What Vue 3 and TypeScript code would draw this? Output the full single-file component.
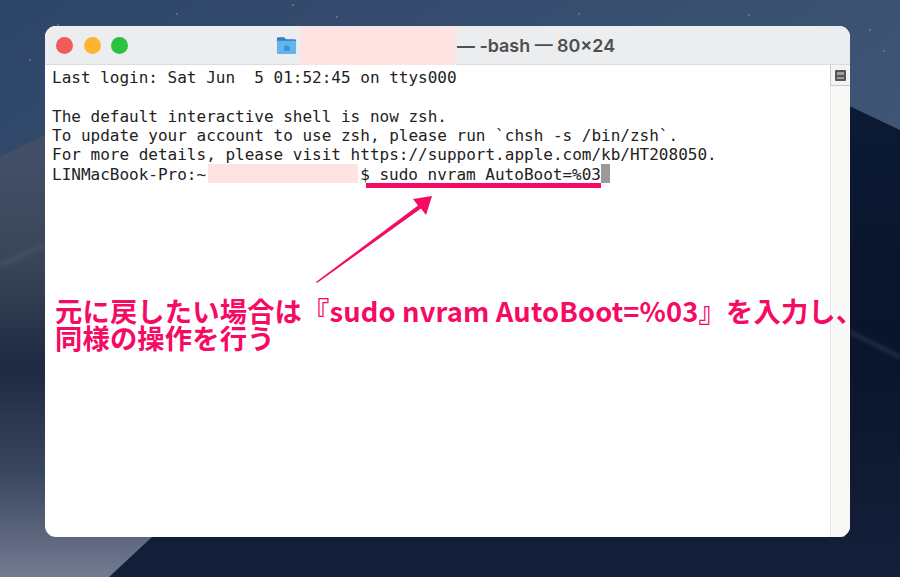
<script setup lang="ts">
const lines: string[] = [
  'Last login: Sat Jun  5 01:52:45 on ttys000',
  '',
  'The default interactive shell is now zsh.',
  'To update your account to use zsh, please run `chsh -s /bin/zsh`.',
  'For more details, please visit https://support.apple.com/kb/HT208050.',
]
const stars: [number, number][] = [[58, 25], [177, 14], [293, 5], [337, 17], [579, 14], [749, 15], [884, 51], [870, 30], [30, 60]]
</script>

<template>
  <div class="desktop">
    <svg class="wallpaper" viewBox="0 0 900 577" aria-hidden="true">
      <defs>
        <linearGradient id="sky" x1="0" y1="0" x2="1" y2="1">
          <stop offset="0" stop-color="#2d4568" />
          <stop offset="1" stop-color="#4a607e" />
        </linearGradient>
        <linearGradient id="left" x1="0" y1="157" x2="0" y2="577" gradientUnits="userSpaceOnUse">
          <stop offset="0" stop-color="#434f66" />
          <stop offset="0.25" stop-color="#3a4559" />
          <stop offset="0.5" stop-color="#1f2941" />
          <stop offset="0.75" stop-color="#39465f" />
          <stop offset="1" stop-color="#737b90" />
        </linearGradient>
        <linearGradient id="right" x1="0" y1="0" x2="0" y2="1">
          <stop offset="0" stop-color="#0c1a34" />
          <stop offset="0.5" stop-color="#0a142b" />
          <stop offset="1" stop-color="#141f3a" />
        </linearGradient>
        <filter id="soft" x="-10%" y="-100%" width="120%" height="300%">
          <feGaussianBlur stdDeviation="2" />
        </filter>
      </defs>
      <rect width="900" height="577" fill="url(#sky)" />
      <circle v-for="(s, i) in stars" :key="i" :cx="s[0]" :cy="s[1]" r="0.8" fill="#8fa0b8" />
      <polygon points="0,577 0,157 45,135 160,135 160,577" fill="url(#left)" />
      <line x1="0" y1="265" x2="45" y2="245" stroke="#4b5569" stroke-width="3" filter="url(#soft)" />
      <polygon points="845,104 900,130 900,577 109,577 152,537 845,537" fill="url(#right)" />
      <line x1="850" y1="332" x2="900" y2="357" stroke="#34435f" stroke-width="2.5" filter="url(#soft)" />
    </svg>

    <main class="window">
      <header class="titlebar">
        <div class="lights">
          <span class="light red"></span>
          <span class="light yellow"></span>
          <span class="light green"></span>
        </div>
        <div class="title">
          <svg class="folder" viewBox="0 0 22 20" aria-hidden="true">
            <path d="M1 3.5a1.5 1.5 0 0 1 1.5-1.5h6l2 2h9A1.5 1.5 0 0 1 21 5.5V7H1z" fill="#2f7fc4" />
            <rect x="1" y="5.5" width="20" height="14" rx="1.2" fill="#63b5ee" />
            <path d="M11 10l-3.4 3H8.6v3h5.8v-3h1L11 10z" fill="#3f8fd2" />
          </svg>
          <span class="redact title-redact"></span>
          <span class="title-text">— -bash — 80×24</span>
        </div>
      </header>

      <div class="body">
        <div class="terminal">
          <div v-for="(line, i) in lines" :key="i" class="line">{{ line }}</div>
          <div class="line prompt">
            <span>LINMacBook-Pro:~</span><span class="redact prompt-redact"></span><span>$ sudo nvram AutoBoot=%03</span><span class="cursor"></span>
          </div>
        </div>
        <aside class="scrollbar">
          <div class="split-btn"><span class="split-icon"></span></div>
        </aside>

        <svg class="arrow" viewBox="0 0 805 511" aria-hidden="true">
          <rect x="321" y="157" width="235" height="5" fill="#f50a64" />
          <polygon points="271,256 373,179.4 368,173 387,170 381,189 376,182.6 272,257" fill="#f50a64" />
        </svg>
        <p class="note">元に戻したい場合は『sudo nvram AutoBoot=%03』を入力し、<br />同様の操作を行う</p>
      </div>
    </main>
  </div>
</template>

<style>
html, body { margin: 0; background: #1a2740; }
</style>

<style scoped>
.desktop {
  position: relative;
  width: 900px;
  height: 577px;
  overflow: hidden;
  padding: 26px 50px 40px 45px;
  box-sizing: border-box;
}
.wallpaper {
  position: absolute;
  inset: 0;
  width: 900px;
  height: 577px;
}
.window {
  position: relative;
  display: flex;
  flex-direction: column;
  height: 511px;
  border-radius: 11px;
  background: #fff;
}
.titlebar {
  position: relative;
  flex: none;
  height: 39px;
  background: #ecedef;
  border-bottom: 1px solid #dcdcdd;
  border-radius: 11px 11px 0 0;
  box-sizing: border-box;
  display: flex;
  align-items: center;
  padding-left: 11px;
}
.lights {
  display: flex;
  gap: 10.5px;
}
.light {
  width: 17px;
  height: 17px;
  border-radius: 50%;
}
.red { background: #f2595a; }
.yellow { background: #fbb52e; }
.green { background: #2cc13f; }
.title {
  display: flex;
  align-items: center;
  margin-left: 148px;
  font-family: "Inter", "Liberation Sans", sans-serif;
  font-weight: 600;
  font-size: 17.9px;
  color: #4f4f50;
}
.folder {
  width: 21px;
  height: 20px;
  margin-top: -1px;
}
.title-redact {
  width: 156px;
  height: 39px;
  margin-left: 3px;
}
.title-text {
  margin-left: 1px;
  white-space: pre;
}
.redact {
  display: inline-block;
  background: #fde3e1;
}
.body {
  position: relative;
  flex: 1;
  display: flex;
  min-height: 0;
}
.terminal {
  flex: 1;
  padding: 3px 0 0 7px;
  font-family: "DejaVu Sans Mono", monospace;
  font-size: 16px;
  line-height: 19.33px;
  color: #222;
  white-space: pre;
}
.line {
  height: 19.33px;
}
.prompt {
  display: flex;
}
.prompt-redact {
  width: 150px;
  height: 19px;
  margin: -1px 2px 0;
}
.cursor {
  width: 9px;
  height: 19px;
  margin-top: -1px;
  background: #9a9a9a;
}
.scrollbar {
  flex: none;
  width: 20px;
  background: #f8f8f7;
  border-left: 1px solid #e8e8e8;
  border-radius: 0 0 11px 0;
  box-sizing: border-box;
}
.split-btn {
  height: 20px;
  margin-left: -1px;
  background: #f3f3f3;
  border-left: 1px solid #c9c9c9;
  border-bottom: 1px solid #c9c9c9;
  display: flex;
  align-items: center;
  justify-content: center;
}
.split-icon {
  width: 11px;
  height: 11px;
  box-sizing: border-box;
  border: 2px solid #555;
  border-radius: 1px;
  background: linear-gradient(#9d9d9d 0 2.5px, #555 2.5px 4.5px, #9d9d9d 4.5px);
}
.arrow {
  position: absolute;
  left: 0;
  top: -39px;
  width: 805px;
  height: 511px;
  pointer-events: none;
}
.note {
  position: absolute;
  left: 10px;
  top: 232px;
  margin: 0;
  font-family: "Noto Sans CJK JP", sans-serif;
  font-weight: 700;
  font-size: 27.3px;
  line-height: 27px;
  letter-spacing: 0.15px;
  color: #f50a64;
  white-space: nowrap;
}
</style>
